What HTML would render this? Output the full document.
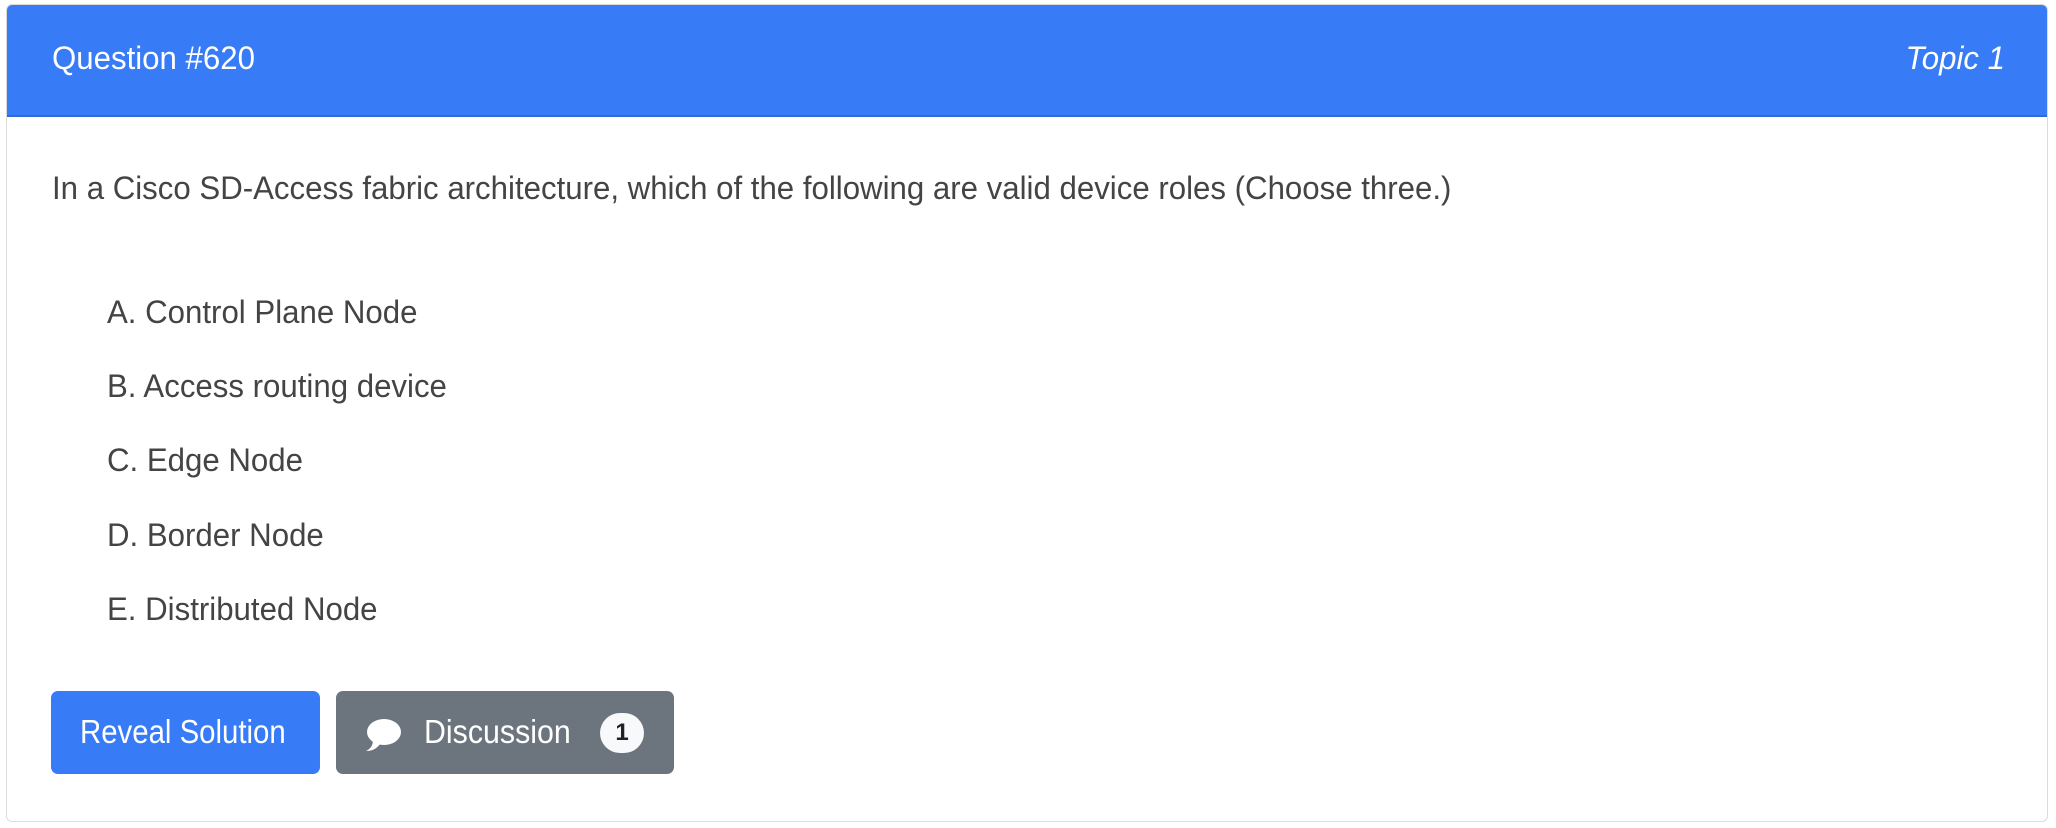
<!DOCTYPE html>
<html><head><meta charset="utf-8"><style>
body{margin:0;width:2056px;height:828px;background:#fff;position:relative;overflow:hidden;font-family:"Liberation Sans",sans-serif;}
.card{position:absolute;left:6px;top:4px;width:2042px;height:818px;border:1px solid #dcdcdc;border-radius:6px;box-sizing:border-box;overflow:hidden;}
.hdr{position:absolute;left:0;top:0;right:0;height:110px;background:#377bf6;border-bottom:2px solid #2f6ad8;}
.t{position:absolute;white-space:nowrap;line-height:1;transform:scaleX(0.975);transform-origin:left center;}
.h{color:#fff;font-size:32px;top:37px;}
.q{color:#444;font-size:32px;}
.btn{position:absolute;top:691px;height:83px;border-radius:7px;}
</style></head><body>
<div class="card">
<div class="hdr">
<div class="t h" style="left:45px">Question #620</div>
<div class="t h" style="right:42px;font-style:italic;transform-origin:right center">Topic 1</div>
</div>
<div class="t q" style="left:45px;top:167px">In a Cisco SD-Access fabric architecture, which of the following are valid device roles (Choose three.)</div>
<div class="t q" style="left:100px;top:291px">A. Control Plane Node</div>
<div class="t q" style="left:100px;top:365px">B. Access routing device</div>
<div class="t q" style="left:100px;top:439px">C. Edge Node</div>
<div class="t q" style="left:100px;top:514px">D. Border Node</div>
<div class="t q" style="left:100px;top:588px">E. Distributed Node</div>
</div>
<div class="btn" style="left:51px;width:269px;background:#377bf6"><div class="t" style="color:#fff;font-size:33px;left:29px;top:24px;transform:scaleX(0.89)">Reveal Solution</div></div>
<div class="btn" style="left:336px;width:338px;background:#6c757d">
<svg style="position:absolute;left:28px;top:27px" width="38" height="34" viewBox="0 0 38 34"><ellipse cx="20" cy="14" rx="17" ry="13" fill="#fff"/><path d="M9 22 C9 28 6 31 2 33 C10 33 14 29 16 26 Z" fill="#fff"/></svg>
<div class="t" style="color:#fff;font-size:33px;left:88px;top:24px;transform:scaleX(0.92)">Discussion</div>
<div style="position:absolute;left:264px;top:22px;width:44px;height:40px;border-radius:20px;background:#f8f9fa;color:#222;font-weight:bold;font-size:24px;text-align:center;line-height:40px;font-family:'Liberation Sans',sans-serif">1</div>
</div>
</body></html>
